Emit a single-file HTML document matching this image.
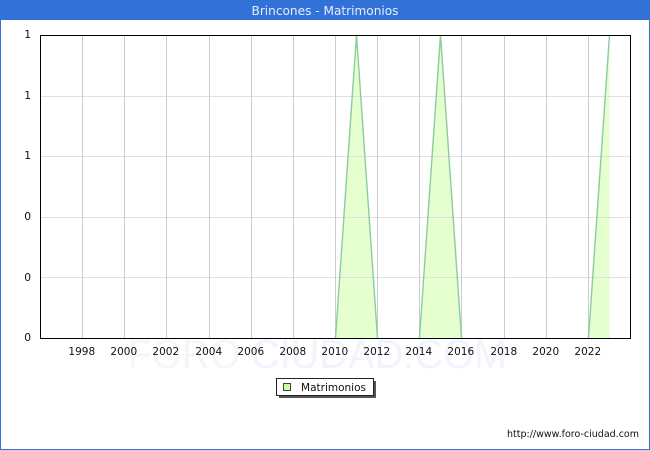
<!DOCTYPE html>
<html>
<head>
<meta charset="utf-8">
<style>
html,body{margin:0;padding:0;background:#fff;}
body{width:650px;height:450px;overflow:hidden;}
svg{display:block;}
text{font-family:"DejaVu Sans",sans-serif;}
</style>
</head>
<body>
<svg width="650" height="450" viewBox="0 0 650 450" xmlns="http://www.w3.org/2000/svg">
<rect width="650" height="450" fill="#fff"/>
<!-- outer frame -->
<rect x="0" y="0" width="650" height="20" fill="#3271d7"/>
<rect x="0" y="0" width="1" height="450" fill="#3271d7"/>
<rect x="649" y="0" width="1" height="450" fill="#3271d7"/>
<rect x="0" y="449" width="650" height="1" fill="#3271d7"/>
<text x="325" y="15" font-size="12" fill="#e6eefb" text-anchor="middle" textLength="147" lengthAdjust="spacingAndGlyphs">Brincones - Matrimonios</text>

<!-- watermark -->
<text x="128" y="368" font-size="41" fill="#f6f6f6" textLength="112" lengthAdjust="spacingAndGlyphs" style="font-family:'Liberation Sans',sans-serif">FORO</text>
<text x="251" y="368" font-size="41" fill="#f3f3fe" textLength="256" lengthAdjust="spacingAndGlyphs" style="font-family:'Liberation Sans',sans-serif">CIUDAD.COM</text>
<rect x="41" y="36" width="589" height="302" fill="#fff"/>

<!-- area -->
<g fill="#e6ffcf">
<polygon points="335.5,338 356.5,35 377.5,338"/>
<polygon points="419.5,338 440.5,35 461.5,338"/>
<polygon points="588.5,338 609.5,35 609.5,338"/>
</g>

<!-- grid -->
<g shape-rendering="crispEdges">
<g fill="#e0e0e0">
<rect x="41" y="96" width="589" height="1"/>
<rect x="41" y="156" width="589" height="1"/>
<rect x="41" y="217" width="589" height="1"/>
<rect x="41" y="277" width="589" height="1"/>
</g>
<g fill="#cccccc">
<rect x="82" y="36" width="1" height="302"/>
<rect x="124" y="36" width="1" height="302"/>
<rect x="166" y="36" width="1" height="302"/>
<rect x="209" y="36" width="1" height="302"/>
<rect x="251" y="36" width="1" height="302"/>
<rect x="293" y="36" width="1" height="302"/>
<rect x="335" y="36" width="1" height="302"/>
<rect x="377" y="36" width="1" height="302"/>
<rect x="419" y="36" width="1" height="302"/>
<rect x="461" y="36" width="1" height="302"/>
<rect x="504" y="36" width="1" height="302"/>
<rect x="546" y="36" width="1" height="302"/>
<rect x="588" y="36" width="1" height="302"/>
</g>
</g>

<g fill="none" stroke="#8accA0" stroke-width="1.4">
<polyline points="335.5,338 356.5,35 377.5,338"/>
<polyline points="419.5,338 440.5,35 461.5,338"/>
<polyline points="588.5,338 609.5,35"/>
</g>

<!-- plot border -->
<g shape-rendering="crispEdges" fill="#000">
<rect x="40" y="35" width="591" height="1"/>
<rect x="40" y="338" width="591" height="1"/>
<rect x="40" y="35" width="1" height="304"/>
<rect x="630" y="35" width="1" height="304"/>
</g>

<!-- y labels -->
<g font-size="10.7" fill="#111" text-anchor="end">
<text x="31" y="38">1</text>
<text x="31" y="99">1</text>
<text x="31" y="159">1</text>
<text x="31" y="220">0</text>
<text x="31" y="281">0</text>
<text x="31" y="341">0</text>
</g>

<!-- x labels -->
<g font-size="10.5" fill="#111" text-anchor="middle">
<text x="81.8" y="355">1998</text>
<text x="123.8" y="355">2000</text>
<text x="165.8" y="355">2002</text>
<text x="208.8" y="355">2004</text>
<text x="250.8" y="355">2006</text>
<text x="292.8" y="355">2008</text>
<text x="334.8" y="355">2010</text>
<text x="376.8" y="355">2012</text>
<text x="418.8" y="355">2014</text>
<text x="460.8" y="355">2016</text>
<text x="503.8" y="355">2018</text>
<text x="545.8" y="355">2020</text>
<text x="587.8" y="355">2022</text>
</g>

<!-- legend -->
<g shape-rendering="crispEdges">
<rect x="279" y="381" width="97" height="17" fill="#555"/>
<rect x="276.5" y="378.5" width="97" height="17" fill="#fff" stroke="#222" stroke-width="1"/>
<rect x="283.5" y="383.5" width="7" height="7" fill="#ccff99" stroke="#444" stroke-width="1"/>
</g>
<text x="301" y="391" font-size="10.5" fill="#111" textLength="65" lengthAdjust="spacingAndGlyphs">Matrimonios</text>

<!-- footer -->
<text x="507" y="437" font-size="9.5" fill="#111" textLength="132" lengthAdjust="spacingAndGlyphs">http://www.foro-ciudad.com</text>
</svg>
</body>
</html>
